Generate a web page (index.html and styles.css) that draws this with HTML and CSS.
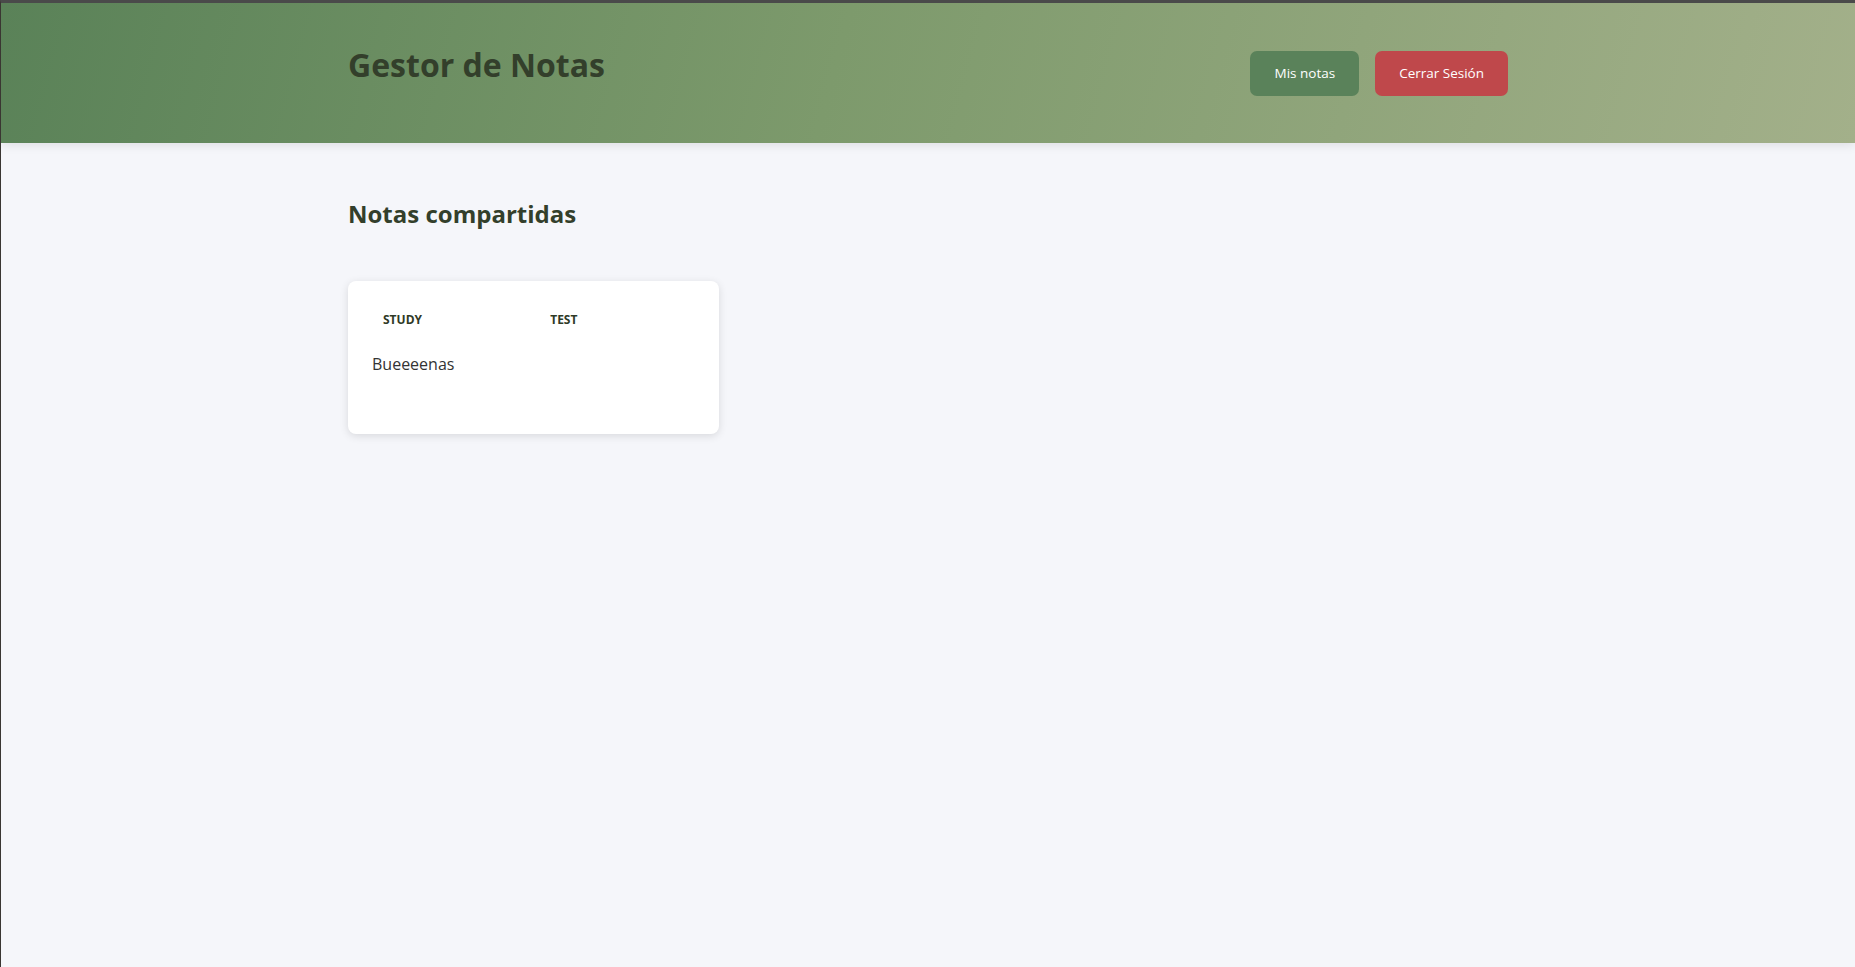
FILE: index.html
```html
<!DOCTYPE html>
<html lang="es">
<head>
<meta charset="utf-8">
<title>Gestor de Notas</title>
<link rel="stylesheet" href="styles.css">
</head>
<body>
<header class="site-header">
  <div class="container header-inner">
    <h1 class="brand">Gestor de Notas</h1>
    <nav class="nav">
      <a class="btn btn-green" href="#">Mis notas</a>
      <a class="btn btn-red" href="#">Cerrar Sesión</a>
    </nav>
  </div>
</header>
<main class="container main">
  <h2 class="section-title">Notas compartidas</h2>
  <div class="notes-grid">
    <article class="note-card">
      <div class="note-tags">
        <span class="tag">STUDY</span>
        <span class="tag">TEST</span>
        <span class="tag-empty"></span>
      </div>
      <p class="note-text">Bueeeenas</p>
    </article>
  </div>
</main>
</body>
</html>
```

FILE: styles.css
```css
* { box-sizing: border-box; }

html, body {
  margin: 0;
  padding: 0;
}

body {
  min-height: 967px;
  background: #f5f6fa;
  border-top: 3px solid #4a4a4a;
  border-left: 1px solid #3a3632;
  font-family: "Open Sans", "Noto Sans", sans-serif;
  color: #333;
}

.container {
  max-width: 1200px;
  margin: 0 auto;
  padding: 0 20px;
}

.site-header {
  height: 140px;
  background: linear-gradient(105deg, #5a8258 0%, #7d9a6c 45%, #a3b08a 100%);
  box-shadow: 0 2px 10px rgba(0, 0, 0, 0.1);
  display: flex;
  align-items: center;
}

.header-inner {
  width: 100%;
  display: flex;
  align-items: center;
  justify-content: space-between;
}

.brand {
  margin: 0 0 16px;
  font-size: 32px;
  font-weight: 700;
  color: #333f2b;
  line-height: 1.362;
}

.nav {
  display: flex;
  gap: 16px;
  margin-top: 2px;
}

.btn {
  display: inline-block;
  padding: 12px 24px;
  border-radius: 7px;
  font-size: 13.5px;
  line-height: 21px;
  color: #ffffff;
  text-decoration: none;
}

.btn-green { background: #5a825a; }
.btn-red { background: #bf484b; }

.main {
  padding-top: 33px;
}

.section-title {
  margin: 22px 0 51px;
  font-size: 24px;
  font-weight: 700;
  color: #333f2b;
  line-height: 32px;
}

.notes-grid {
  display: grid;
  grid-template-columns: repeat(auto-fill, minmax(300px, 1fr));
  gap: 24px;
}

.note-card {
  background: #ffffff;
  border-radius: 8px;
  padding: 27px 24px 24px;
  box-shadow: 0 2px 8px rgba(0, 0, 0, 0.12);
}

.note-tags {
  display: flex;
  justify-content: space-between;
  margin-bottom: 21px;
}

.tag {
  display: inline-block;
  padding: 4px 11px;
  font-size: 12px;
  font-weight: 700;
  line-height: 16px;
  color: #2f3a26;
}

.tag-empty {
  width: 0;
}

.note-text {
  margin: 0 0 35px;
  font-size: 16px;
  line-height: 22px;
  color: #333333;
}
```
